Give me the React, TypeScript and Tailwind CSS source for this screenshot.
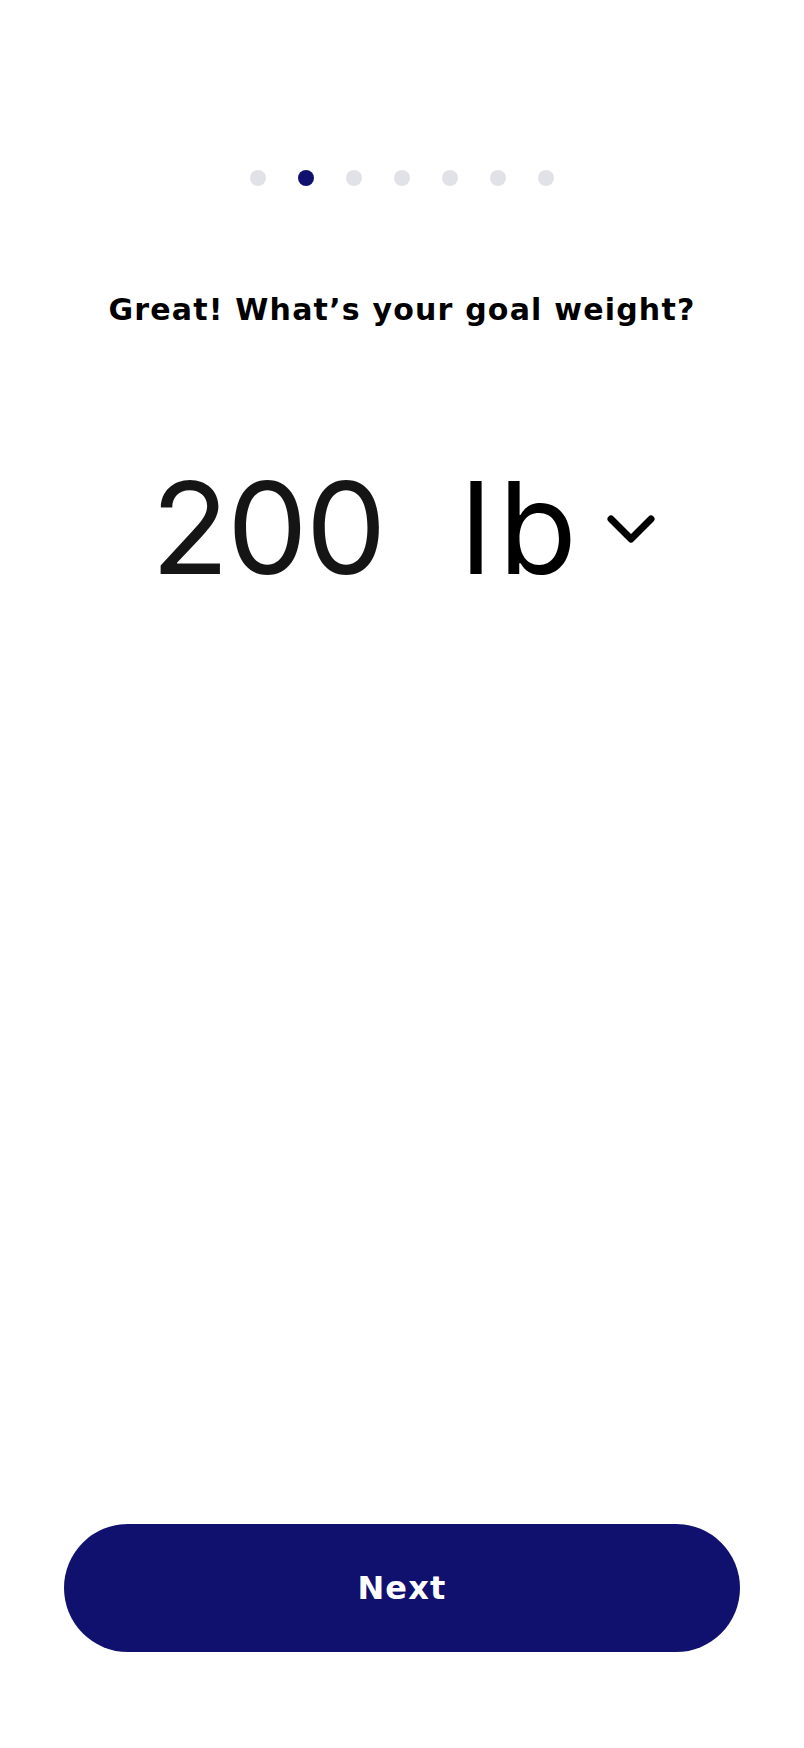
import React from "react";

export default function App() {
  const dots = [0, 1, 2, 3, 4, 5, 6];
  return (
    <div className="min-h-screen w-full bg-white flex flex-col" style={{ fontFamily: "Inter, 'Noto Sans', sans-serif" }}>
      <div className="flex justify-center gap-[32px] pt-[170px]">
        {dots.map((i) => (
          <div
            key={i}
            className={i === 1 ? "w-4 h-4 rounded-full bg-[#10106e]" : "w-4 h-4 rounded-full bg-[#e1e1e8]"}
          />
        ))}
      </div>
      <h1
        className="mt-[105px] text-center text-[30px] leading-[37px] font-bold text-black tracking-[1.2px]"
        style={{ fontFamily: "'DejaVu Sans', sans-serif" }}
      >
        Great! What’s your goal weight?
      </h1>
      <div className="mt-[136px] flex items-start justify-center pl-[3px]">
        <span className="text-[128px] leading-[128px] text-[#151515] font-normal tracking-[-2px]">200</span>
        <span className="ml-[76px] text-[128px] leading-[128px] text-black font-normal">
          <span className="mr-[7px]">l</span>b
        </span>
        <svg className="ml-[29px] mt-[50px]" width="50" height="32" viewBox="0 0 50 32" fill="none">
          <polyline points="5,5 25,25 45,5" stroke="#000" strokeWidth="7" strokeLinecap="round" strokeLinejoin="round" />
        </svg>
      </div>
      <div className="mt-auto px-16 pb-[96px]">
        <button
          className="w-full h-[128px] rounded-full bg-[#10106e] text-white text-[32px] font-bold tracking-[1.2px]"
          style={{ fontFamily: "'DejaVu Sans', sans-serif" }}
        >
          Next
        </button>
      </div>
    </div>
  );
}
